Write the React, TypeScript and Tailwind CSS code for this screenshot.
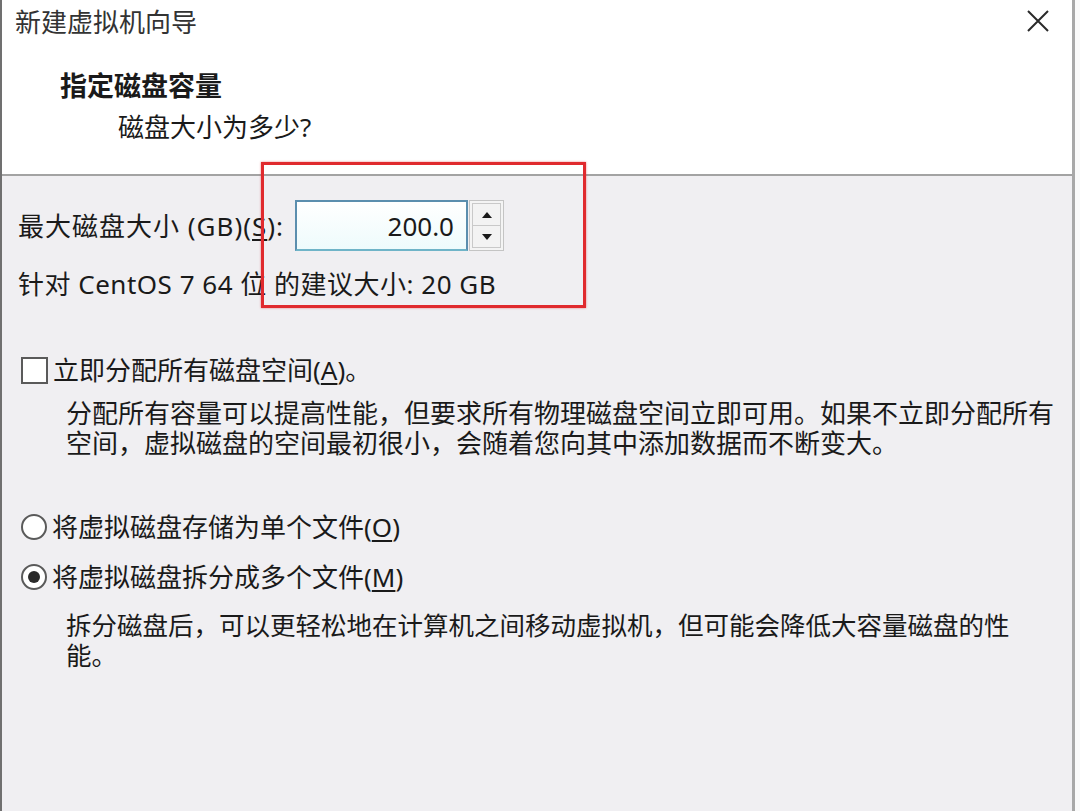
import React from "react";

const FONT = "font-['Noto_Sans','Noto_Sans_CJK_SC',sans-serif]";

function Checkbox() {
  return <div className="h-[27px] w-[27px] shrink-0 border-2 border-[#5a5a5a] bg-white" />;
}

function Radio({ checked }: { checked?: boolean }) {
  return (
    <div className="flex h-[26px] w-[26px] shrink-0 items-center justify-center rounded-full border-2 border-[#5a5a5a] bg-white">
      {checked && <div className="h-[12px] w-[12px] rounded-full bg-[#2a2a2a]" />}
    </div>
  );
}

function Spinner() {
  return (
    <div className="ml-[1px] flex h-[51px] w-[35px] flex-col border border-[#c4c4c4] bg-[#f4f4f4] p-[2px]">
      <div className="flex flex-1 items-center justify-center border border-[#c9c9c9] bg-[#f3f3f3]">
        <svg width="12" height="8" viewBox="0 0 12 8">
          <path d="M1 7 L6 1 L11 7 Z" fill="#1a1a1a" />
        </svg>
      </div>
      <div className="flex flex-1 items-center justify-center border border-t-0 border-[#c9c9c9] bg-[#f3f3f3]">
        <svg width="12" height="8" viewBox="0 0 12 8">
          <path d="M1 1 L11 1 L6 7 Z" fill="#1a1a1a" />
        </svg>
      </div>
    </div>
  );
}

export default function App() {
  return (
    <div className={`relative h-[811px] w-[1080px] overflow-hidden bg-[#fafafa] text-[#1a1a1a] ${FONT}`}>
      <div className="flex h-full w-[1075px] flex-col border-l-2 border-r-[3px] border-l-[#707070] border-r-[#a8a8a8]">
        {/* header */}
        <div className="relative h-[176px] shrink-0 border-b-2 border-[#a3a3a3] bg-white">
          <div className="pl-[13px] pt-[7px] text-[26px] leading-[30px] text-[#333]">新建虚拟机向导</div>
          <svg className="absolute right-[22px] top-[9px]" width="24" height="24" viewBox="0 0 24 24">
            <path d="M2 2 L22 22 M22 2 L2 22" stroke="#2a2a2a" strokeWidth="2" />
          </svg>
          <div className="mt-[34px] pl-[58px] text-[27px] font-bold leading-[30px]">指定磁盘容量</div>
          <div className="mt-[11px] pl-[116px] text-[26px] leading-[30px]">磁盘大小为多少?</div>
        </div>

        {/* body */}
        <div className="flex-1 bg-[#f0eff2] pl-[16px] text-[26px] leading-[30px]">
          <div className="mt-[24px] flex items-center">
            <span className="w-[277px] whitespace-nowrap tracking-[1px]">
              最大磁盘大小 (GB)(<span className="underline underline-offset-[3px]">S</span>):
            </span>
            <div className="flex h-[51px] w-[173px] items-center justify-end border-2 border-[#5b8eae] border-b-[#6fb4c8] bg-gradient-to-b from-white to-[#eefbfc] pr-[12px]">
              200.0
            </div>
            <Spinner />
          </div>
          <div className="mt-[18px] whitespace-nowrap tracking-[0.5px]">针对 CentOS 7 64 位 的建议大小: 20 GB</div>

          <div className="mt-[56px] flex items-center gap-[5px] pl-[3px]">
            <Checkbox />
            <span>
              立即分配所有磁盘空间(<span className="underline underline-offset-[3px]">A</span>)。
            </span>
          </div>
          <div className="mt-[13px] whitespace-nowrap pl-[48px]">
            分配所有容量可以提高性能，但要求所有物理磁盘空间立即可用。如果不立即分配所有
            <br />
            空间，虚拟磁盘的空间最初很小，会随着您向其中添加数据而不断变大。
          </div>

          <div className="mt-[54px] flex items-center gap-[5px] pl-[3px]">
            <Radio />
            <span>
              将虚拟磁盘存储为单个文件(<span className="underline underline-offset-[3px]">O</span>)
            </span>
          </div>
          <div className="mt-[20px] flex items-center gap-[5px] pl-[3px]">
            <Radio checked />
            <span>
              将虚拟磁盘拆分成多个文件(<span className="underline underline-offset-[3px]">M</span>)
            </span>
          </div>
          <div className="mt-[18px] whitespace-nowrap pl-[48px] text-[25.5px]">
            拆分磁盘后，可以更轻松地在计算机之间移动虚拟机，但可能会降低大容量磁盘的性
            <br />
            能。
          </div>
        </div>
      </div>

      {/* red annotation box */}
      <div className="absolute left-[261px] top-[162px] h-[146px] w-[325px] border-[3px] border-[#e02a2e] shadow-[0_0_2px_rgba(224,42,46,0.6)]" />
    </div>
  );
}
